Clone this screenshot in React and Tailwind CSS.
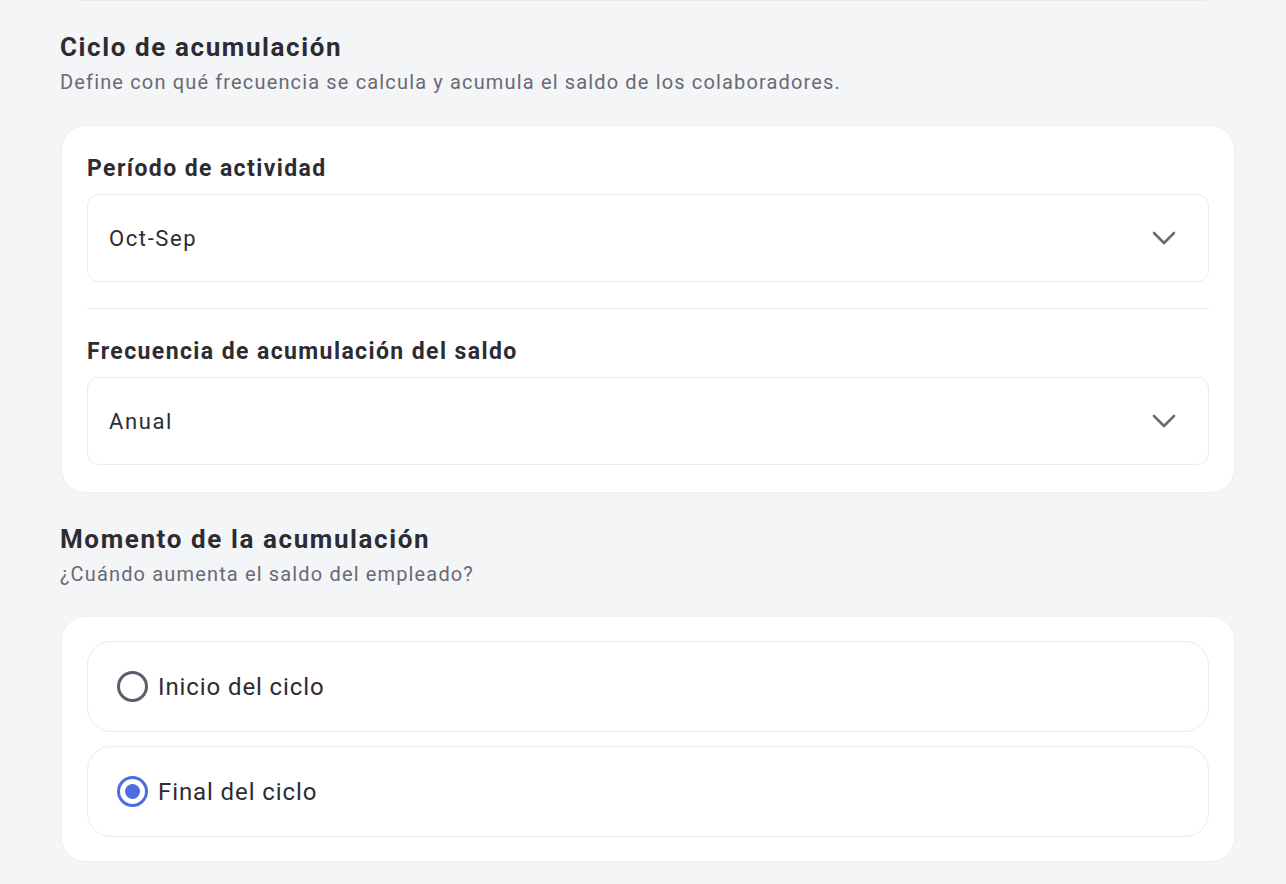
import { useState } from 'react'

const periodOptions = ['Oct-Sep', 'Ene-Dic', 'Abr-Mar']
const freqOptions = ['Anual', 'Semestral', 'Trimestral', 'Mensual']

function Chevron() {
  return (
    <svg width="24" height="14" viewBox="0 0 24 14" fill="none" className="shrink-0">
      <path d="M2 2l10 10L22 2" stroke="#6b6b6e" strokeWidth="2.6" strokeLinecap="round" strokeLinejoin="round" />
    </svg>
  )
}

function SelectField({ label, value }) {
  return (
    <div>
      <div className="text-[23px] leading-[30px] font-bold tracking-[1.4px] text-[#2d2c33]">{label}</div>
      <button
        type="button"
        className="mt-[10px] flex h-[88px] w-full items-center justify-between rounded-xl border border-[#ebebed] bg-white pl-[21px] pr-[32px] text-left"
      >
        <span className="text-[22px] tracking-[1.6px] text-[#2d2c33]">{value}</span>
        <Chevron />
      </button>
    </div>
  )
}

function RadioOption({ label, checked, onClick }) {
  return (
    <button
      type="button"
      onClick={onClick}
      className="flex h-[91px] w-full items-center gap-[10px] rounded-[24px] border border-[#ebebed] bg-white pl-[29px] text-left"
    >
      {checked ? (
        <span className="flex h-[31px] w-[31px] items-center justify-center rounded-full border-[3px] border-[#4e6ce3]">
          <span className="h-[15px] w-[15px] rounded-full bg-[#4e6ce3]" />
        </span>
      ) : (
        <span className="h-[31px] w-[31px] rounded-full border-[3px] border-[#5f5c6b]" />
      )}
      <span className="text-[24px] tracking-[0.9px] text-[#2d2c33]">{label}</span>
    </button>
  )
}

function SectionHeader({ title, subtitle }) {
  return (
    <div className="pl-[60px]">
      <h2 className="text-[26px] leading-[32px] font-bold tracking-[1.6px] text-[#2d2c33]">{title}</h2>
      <p className="mt-[5px] text-[20px] leading-[28px] tracking-[1.15px] text-[#6a6976]">{subtitle}</p>
    </div>
  )
}

export default function App() {
  const [moment, setMoment] = useState('final')

  return (
    <div className="min-h-screen bg-[#f4f5f7] font-['Roboto',sans-serif]">
      <div className="mx-[80px] h-px bg-[#e9eaed]" />

      <div className="pt-[30px]">
        <SectionHeader
          title="Ciclo de acumulación"
          subtitle="Define con qué frecuencia se calcula y acumula el saldo de los colaboradores."
        />

        <div className="ml-[61px] mr-[51px] mt-[29px] rounded-[24px] border border-[#eeeff1] bg-white px-[25px] pt-[28px] pb-[27px]">
          <SelectField label="Período de actividad" value={periodOptions[0]} />
          <div className="mt-[26px] mb-[28px] h-px bg-[#ebebed]" />
          <SelectField label="Frecuencia de acumulación del saldo" value={freqOptions[0]} />
        </div>

        <div className="mt-[30px]">
          <SectionHeader title="Momento de la acumulación" subtitle="¿Cuándo aumenta el saldo del empleado?" />
        </div>

        <div className="ml-[61px] mr-[51px] mt-[28px] flex flex-col gap-[14px] rounded-[24px] border border-[#eeeff1] bg-white px-[25px] pt-[24px] pb-[24px]">
          <RadioOption label="Inicio del ciclo" checked={moment === 'inicio'} onClick={() => setMoment('inicio')} />
          <RadioOption label="Final del ciclo" checked={moment === 'final'} onClick={() => setMoment('final')} />
        </div>
      </div>
    </div>
  )
}
